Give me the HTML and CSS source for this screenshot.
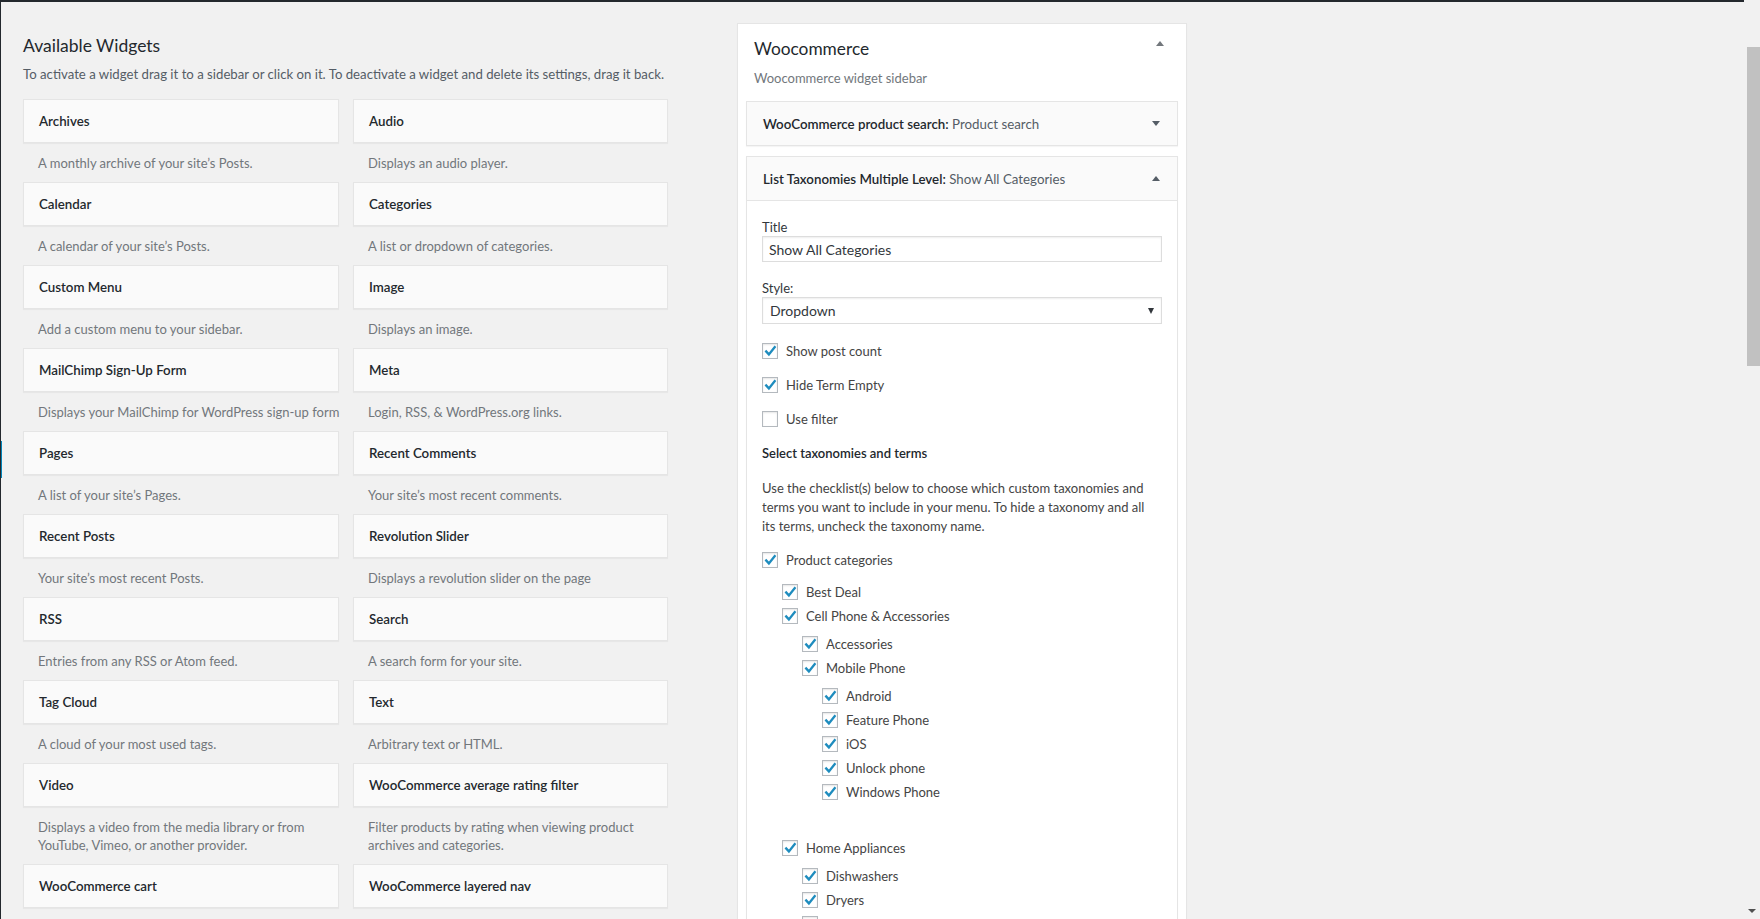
FILE: index.html
```html
<!DOCTYPE html>
<html lang="en">
<head>
<meta charset="utf-8">
<title>Widgets</title>
<link rel="stylesheet" href="styles.css">
</head>
<body>
<div class="frame">
  <div class="screen">
    <span class="menu-edge"></span>
    <div class="content">
      <section class="available">
        <h2 class="avail-title">Available Widgets</h2>
        <p class="avail-desc">To activate a widget drag it to a sidebar or click on it. To deactivate a widget and delete its settings, drag it back.</p>
        <div class="widget-grid">
          <div class="widget"><div class="widget-top">Archives</div><div class="widget-desc">A monthly archive of your site’s Posts.</div></div>
          <div class="widget"><div class="widget-top">Audio</div><div class="widget-desc">Displays an audio player.</div></div>
          <div class="widget"><div class="widget-top">Calendar</div><div class="widget-desc">A calendar of your site’s Posts.</div></div>
          <div class="widget"><div class="widget-top">Categories</div><div class="widget-desc">A list or dropdown of categories.</div></div>
          <div class="widget"><div class="widget-top">Custom Menu</div><div class="widget-desc">Add a custom menu to your sidebar.</div></div>
          <div class="widget"><div class="widget-top">Image</div><div class="widget-desc">Displays an image.</div></div>
          <div class="widget"><div class="widget-top">MailChimp Sign-Up Form</div><div class="widget-desc">Displays your MailChimp for WordPress sign-up form</div></div>
          <div class="widget"><div class="widget-top">Meta</div><div class="widget-desc">Login, RSS, &amp; WordPress.org links.</div></div>
          <div class="widget"><div class="widget-top">Pages</div><div class="widget-desc">A list of your site’s Pages.</div></div>
          <div class="widget"><div class="widget-top">Recent Comments</div><div class="widget-desc">Your site’s most recent comments.</div></div>
          <div class="widget"><div class="widget-top">Recent Posts</div><div class="widget-desc">Your site’s most recent Posts.</div></div>
          <div class="widget"><div class="widget-top">Revolution Slider</div><div class="widget-desc">Displays a revolution slider on the page</div></div>
          <div class="widget"><div class="widget-top">RSS</div><div class="widget-desc">Entries from any RSS or Atom feed.</div></div>
          <div class="widget"><div class="widget-top">Search</div><div class="widget-desc">A search form for your site.</div></div>
          <div class="widget"><div class="widget-top">Tag Cloud</div><div class="widget-desc">A cloud of your most used tags.</div></div>
          <div class="widget"><div class="widget-top">Text</div><div class="widget-desc">Arbitrary text or HTML.</div></div>
          <div class="widget"><div class="widget-top">Video</div><div class="widget-desc">Displays a video from the media library or from<br>YouTube, Vimeo, or another provider.</div></div>
          <div class="widget"><div class="widget-top">WooCommerce average rating filter</div><div class="widget-desc">Filter products by rating when viewing product<br>archives and categories.</div></div>
          <div class="widget"><div class="widget-top">WooCommerce cart</div></div>
          <div class="widget"><div class="widget-top">WooCommerce layered nav</div></div>
        </div>
      </section>

      <section class="sidebar">
        <div class="sidebar-head">
          <h2 class="sidebar-title">Woocommerce</h2>
          <span class="tri tri-up tri-light"></span>
        </div>
        <p class="sidebar-desc">Woocommerce widget sidebar</p>

        <div class="sw">
          <div class="sw-top">
            <h3 class="sw-title">WooCommerce product search:<span class="in-title"> Product search</span></h3>
            <span class="tri tri-down"></span>
          </div>
        </div>

        <div class="sw sw-open">
          <div class="sw-top">
            <h3 class="sw-title">List Taxonomies Multiple Level:<span class="in-title"> Show All Categories</span></h3>
            <span class="tri tri-up"></span>
          </div>
          <div class="sw-inside">
            <label class="field-label">Title</label>
            <div class="text-input">Show All Categories</div>
            <label class="field-label field-label-style">Style:</label>
            <div class="select-input"><span>Dropdown</span><span class="select-arrow"></span></div>

            <div class="opt opt-first"><span class="cb on"><svg viewBox="0 0 16 16"><path d="M3.4 7.6 L6.9 11.4 L13.4 3.2"/></svg></span><span class="opt-label">Show post count</span></div>
            <div class="opt"><span class="cb on"><svg viewBox="0 0 16 16"><path d="M3.4 7.6 L6.9 11.4 L13.4 3.2"/></svg></span><span class="opt-label">Hide Term Empty</span></div>
            <div class="opt"><span class="cb"></span><span class="opt-label">Use filter</span></div>

            <p class="section-head">Select taxonomies and terms</p>
            <p class="help">Use the checklist(s) below to choose which custom taxonomies and<br>terms you want to include in your menu. To hide a taxonomy and all<br>its terms, uncheck the taxonomy name.</p>

            <ul class="tax">
              <li>
                <div class="row"><span class="cb on"><svg viewBox="0 0 16 16"><path d="M3.4 7.6 L6.9 11.4 L13.4 3.2"/></svg></span><span class="row-label">Product categories</span></div>
                <ul class="children children-top">
                  <li><div class="row"><span class="cb on"><svg viewBox="0 0 16 16"><path d="M3.4 7.6 L6.9 11.4 L13.4 3.2"/></svg></span><span class="row-label">Best Deal</span></div></li>
                  <li>
                    <div class="row"><span class="cb on"><svg viewBox="0 0 16 16"><path d="M3.4 7.6 L6.9 11.4 L13.4 3.2"/></svg></span><span class="row-label">Cell Phone &amp; Accessories</span></div>
                    <ul class="children">
                      <li><div class="row"><span class="cb on"><svg viewBox="0 0 16 16"><path d="M3.4 7.6 L6.9 11.4 L13.4 3.2"/></svg></span><span class="row-label">Accessories</span></div></li>
                      <li>
                        <div class="row"><span class="cb on"><svg viewBox="0 0 16 16"><path d="M3.4 7.6 L6.9 11.4 L13.4 3.2"/></svg></span><span class="row-label">Mobile Phone</span></div>
                        <ul class="children">
                          <li><div class="row"><span class="cb on"><svg viewBox="0 0 16 16"><path d="M3.4 7.6 L6.9 11.4 L13.4 3.2"/></svg></span><span class="row-label">Android</span></div></li>
                          <li><div class="row"><span class="cb on"><svg viewBox="0 0 16 16"><path d="M3.4 7.6 L6.9 11.4 L13.4 3.2"/></svg></span><span class="row-label">Feature Phone</span></div></li>
                          <li><div class="row"><span class="cb on"><svg viewBox="0 0 16 16"><path d="M3.4 7.6 L6.9 11.4 L13.4 3.2"/></svg></span><span class="row-label">iOS</span></div></li>
                          <li><div class="row"><span class="cb on"><svg viewBox="0 0 16 16"><path d="M3.4 7.6 L6.9 11.4 L13.4 3.2"/></svg></span><span class="row-label">Unlock phone</span></div></li>
                          <li><div class="row"><span class="cb on"><svg viewBox="0 0 16 16"><path d="M3.4 7.6 L6.9 11.4 L13.4 3.2"/></svg></span><span class="row-label">Windows Phone</span></div></li>
                        </ul>
                      </li>
                    </ul>
                  </li>
                  <li>
                    <div class="row"><span class="cb on"><svg viewBox="0 0 16 16"><path d="M3.4 7.6 L6.9 11.4 L13.4 3.2"/></svg></span><span class="row-label">Home Appliances</span></div>
                    <ul class="children">
                      <li><div class="row"><span class="cb on"><svg viewBox="0 0 16 16"><path d="M3.4 7.6 L6.9 11.4 L13.4 3.2"/></svg></span><span class="row-label">Dishwashers</span></div></li>
                      <li><div class="row"><span class="cb on"><svg viewBox="0 0 16 16"><path d="M3.4 7.6 L6.9 11.4 L13.4 3.2"/></svg></span><span class="row-label">Dryers</span></div></li>
                      <li><div class="row"><span class="cb"></span></div></li>
                    </ul>
                  </li>
                </ul>
              </li>
            </ul>
          </div>
        </div>
      </section>
    </div>
  </div>
  <div class="scrollbar">
    <div class="thumb"></div>
    <span class="sb-arrow"></span>
  </div>
</div>
</body>
</html>
```
FILE: styles.css
```css
* { box-sizing: border-box; }
html, body { margin: 0; padding: 0; height: 919px; overflow: hidden; }
body {
  background: #f1f1f1;
  font-family: Lato, "Noto Sans", sans-serif;
  font-size: 13px;
  color: #444;
}
h2, h3, p, ul { margin: 0; padding: 0; }
ul { list-style: none; }

.frame { display: flex; height: 919px; }
.screen {
  flex: 1;
  min-width: 0;
  position: relative;
  border-top: 2px solid #23282d;
  border-left: 1px solid #23282d;
  overflow: hidden;
}
.menu-edge {
  position: absolute;
  left: -1px;
  top: 439px;
  width: 2px;
  height: 37px;
  background: #0085ba;
}
.content { display: flex; align-items: flex-start; }

/* ---------- Available widgets ---------- */
.available { width: 645px; margin-left: 22px; padding-top: 32px; flex: none; }
.avail-title {
  font-size: 17.5px;
  line-height: 24px;
  font-weight: 400;
  color: #23282d;
}
.avail-desc {
  margin-top: 7px;
  line-height: 18px;
  font-size: 13.2px;
  color: #555d66;
  white-space: nowrap;
}
.widget-grid {
  margin-top: 16px;
  display: grid;
  grid-template-columns: 316px 315px;
  column-gap: 14px;
  align-items: start;
}
.widget-top {
  height: 44px;
  line-height: 42px;
  padding: 0 15px;
  background: #fafafa;
  border: 1px solid #e5e5e5;
  box-shadow: 0 1px 1px rgba(0,0,0,.04);
  font-size: 13.3px;
  font-weight: 600;
  color: #23282d;
  white-space: nowrap;
}
.widget-desc {
  padding: 11px 15px 10px 15px;
  line-height: 18px;
  color: #72777c;
  white-space: nowrap;
}

/* ---------- Sidebar panel ---------- */
.sidebar {
  flex: none;
  width: 450px;
  margin-left: 69px;
  margin-top: 21px;
  padding: 0 8px;
  background: #fff;
  border: 1px solid #e5e5e5;
  box-shadow: 0 1px 1px rgba(0,0,0,.04);
  min-height: 1200px;
}
.sidebar-head {
  display: flex;
  justify-content: space-between;
  align-items: flex-start;
  padding: 13px 14px 0 8px;
}
.sidebar-title {
  font-size: 17.3px;
  line-height: 24px;
  font-weight: 400;
  color: #23282d;
}
.sidebar-head .tri { margin-top: 4px; }
.sidebar-desc {
  margin-top: 8px;
  padding-left: 8px;
  line-height: 18px;
  color: #72777c;
}

.tri { width: 0; height: 0; border-left: 4px solid transparent; border-right: 4px solid transparent; }
.tri-up { border-bottom: 5px solid #555d66; }
.tri-down { border-top: 5px solid #555d66; }
.tri-light.tri-up { border-bottom-color: #72777c; }

.sw { margin-top: 14px; border: 1px solid #e5e5e5; box-shadow: 0 1px 1px rgba(0,0,0,.04); }
.sw + .sw { margin-top: 10px; }
.sw-top {
  display: flex;
  align-items: center;
  justify-content: space-between;
  height: 43px;
  padding: 0 17px 0 16px;
  background: #fafafa;
}
.sw-open .sw-top { height: 44px; border-bottom: 1px solid #e5e5e5; }
.sw-title {
  font-size: 13.3px;
  font-weight: 600;
  color: #23282d;
  line-height: 18px;
  white-space: nowrap;
}
.in-title { font-weight: 400; color: #555d66; }

.sw-inside { background: #fff; padding: 17px 15px 40px; }
.field-label { display: block; line-height: 18px; color: #32373c; }
.field-label-style { margin-top: 18px; line-height: 17px; }
.text-input, .select-input {
  display: flex;
  align-items: center;
  width: 100%;
  border: 1px solid #ddd;
  box-shadow: inset 0 1px 2px rgba(0,0,0,.07);
  background: #fff;
  font-size: 14px;
  color: #32373c;
}
.text-input { height: 26px; padding: 0 6px; }
.select-input { height: 27px; padding: 0 7px 0 7px; justify-content: space-between; }
.select-arrow {
  width: 0; height: 0;
  border-left: 3.5px solid transparent;
  border-right: 3.5px solid transparent;
  border-top: 6px solid #32373c;
}

.opt { display: flex; align-items: center; gap: 8px; height: 16px; margin-top: 18px; }
.opt-first { margin-top: 19px; }
.opt-label, .row-label { color: #444; line-height: 18px; white-space: nowrap; }

.cb {
  flex: none;
  width: 16px;
  height: 16px;
  border: 1px solid #b4b9be;
  background: #fff;
  box-shadow: inset 0 1px 2px rgba(0,0,0,.1);
  position: relative;
}
.cb svg { position: absolute; left: -1px; top: -1px; width: 16px; height: 16px; overflow: visible; }
.cb svg path { fill: none; stroke: #1e8cbe; stroke-width: 2.3; stroke-linejoin: miter; stroke-linecap: butt; }

.section-head { margin-top: 17px; line-height: 18px; font-weight: 600; color: #23282d; }
.help { margin-top: 17px; line-height: 19px; color: #444; white-space: nowrap; }

.tax { margin-top: 15px; }
.row { display: flex; align-items: center; gap: 8px; height: 18px; }
.tax li { margin-bottom: 6px; }
.children { margin: 10px 0 0 20px; padding-bottom: 10px; }
.children-top { margin-top: 14px; }

/* ---------- Scrollbar ---------- */
.scrollbar {
  flex: none;
  width: 16px;
  display: flex;
  flex-direction: column;
  align-items: center;
  background: #f1f1f1;
}
.thumb { width: 13px; margin-top: 47px; margin-left: 2px; height: 319px; background: #c1c1c1; }
.sb-arrow {
  margin-top: auto;
  margin-bottom: 6px;
  width: 0; height: 0;
  border-left: 4px solid transparent;
  border-right: 4px solid transparent;
  border-top: 4px solid #505050;
}
```
